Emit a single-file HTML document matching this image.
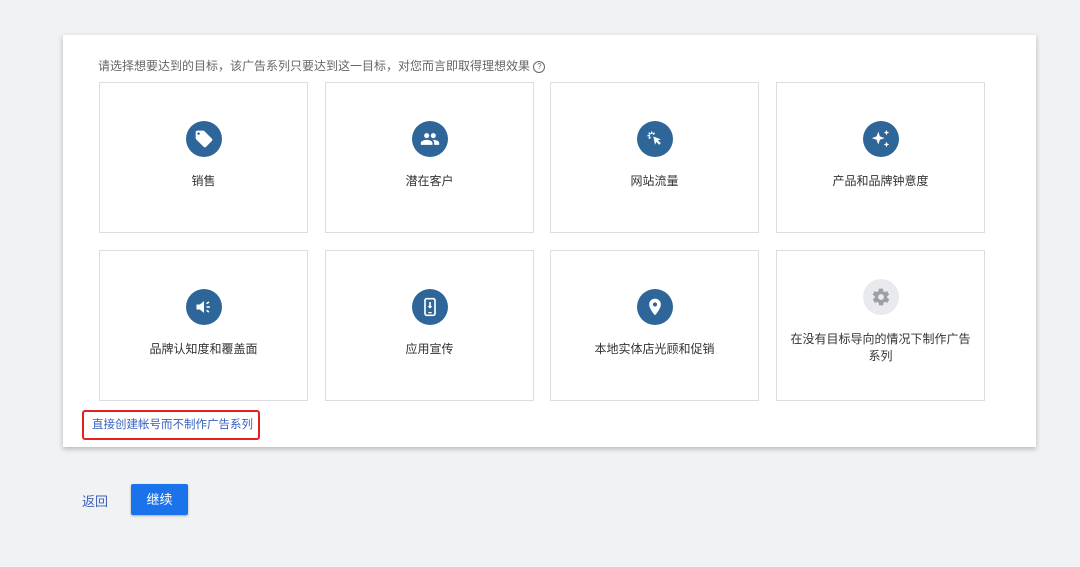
<!DOCTYPE html>
<html><head><meta charset="utf-8"><style>
body{margin:0;width:1080px;height:567px;background:#f1f2f4;font-family:"Liberation Sans","Noto Sans CJK SC",sans-serif;position:relative;overflow:hidden}
.panel{position:absolute;left:63px;top:35px;width:973px;height:412px;background:#fff;box-shadow:0 2px 5px rgba(0,0,0,.25)}
.hint{position:absolute;left:98px;top:57px;font-size:12px;color:#666}
.card{position:absolute;width:207px;height:149px;border:1.5px solid #dcdde0;box-sizing:content-box;background:#fff}
.ic{position:absolute;left:86px;top:38px;width:36px;height:36px;border-radius:50%;background:#2f6699;display:flex;align-items:center;justify-content:center}
.lb{position:absolute;left:0;right:0;top:90px;text-align:center;font-size:12px;color:#333;line-height:17px}
.link{position:absolute;left:82px;top:410px;width:166px;height:26px;border:2px solid #e52020;border-radius:3px;font-size:11.5px;color:#3560c0;line-height:26px;padding-left:8px;box-sizing:content-box;white-space:nowrap}
.back{position:absolute;left:82px;top:491px;font-size:13px;color:#3a5fb8}
.btn{position:absolute;left:131px;top:484px;width:57px;height:31px;background:#1a73e8;border-radius:2px;color:#fff;font-size:13px;text-align:center;line-height:31px;box-shadow:0 1px 2px rgba(0,0,0,.3)}
</style></head><body>
<div class="panel"></div>
<div class="hint">请选择想要达到的目标，该广告系列只要达到这一目标，对您而言即取得理想效果 <span style="display:inline-block;width:10px;height:10px;border:1px solid #666;border-radius:50%;font-size:8px;line-height:10px;text-align:center;vertical-align:1px">?</span></div>

<div class="card" style="left:99px;top:82px"><div class="ic"><svg width="20" height="20" viewBox="0 0 24 24"><path fill="#fff" d="M21.4 11.6l-9-9C12 2.2 11.6 2 11 2H4c-1.1 0-2 .9-2 2v7c0 .6.2 1.1.6 1.4l9 9c.4.4.9.6 1.4.6s1-.2 1.4-.6l7-7c.4-.4.6-.9.6-1.4s-.2-1-.6-1.4zM5.5 7C4.7 7 4 6.3 4 5.5S4.7 4 5.5 4 7 4.7 7 5.5 6.3 7 5.5 7z"/></svg></div><div class="lb">销售</div></div>
<div class="card" style="left:325px;top:82px"><div class="ic"><svg width="20" height="20" viewBox="0 0 24 24"><path fill="#fff" d="M16 11c1.7 0 3-1.3 3-3s-1.3-3-3-3-3 1.3-3 3 1.3 3 3 3zm-8 0c1.7 0 3-1.3 3-3S9.7 5 8 5 5 6.3 5 8s1.3 3 3 3zm0 2c-2.3 0-7 1.2-7 3.5V19h14v-2.5c0-2.3-4.7-3.5-7-3.5zm8 0c-.3 0-.6 0-1 .1 1.2.8 2 2 2 3.4V19h6v-2.5c0-2.3-4.7-3.5-7-3.5z"/></svg></div><div class="lb">潜在客户</div></div>
<div class="card" style="left:550px;top:82px"><div class="ic"><svg width="20" height="20" viewBox="0 0 24 24"><path fill="#fff" d="M10 9l9 3.5-3.5 1.2L19 17l-2 2-3.3-3.5L12 19z"/><path stroke="#fff" stroke-width="1.8" d="M8 3v3M3 8h3M4.5 4.5l2 2M11.5 4.5l-2 2M4.5 11.5l2-2"/></svg></div><div class="lb">网站流量</div></div>
<div class="card" style="left:776px;top:82px"><div class="ic"><svg width="22" height="22" viewBox="0 0 24 24"><path fill="#fff" d="M9 4l1.8 5.2L16 11l-5.2 1.8L9 18l-1.8-5.2L2 11l5.2-1.8zM18 2l.9 2.1L21 5l-2.1.9L18 8l-.9-2.1L15 5l2.1-.9zM18 15l.9 2.1L21 18l-2.1.9L18 21l-.9-2.1L15 18l2.1-.9z"/></svg></div><div class="lb">产品和品牌钟意度</div></div>

<div class="card" style="left:99px;top:250px"><div class="ic"><svg width="20" height="20" viewBox="0 0 24 24"><path fill="#fff" d="M3 9h4l5-4v14l-5-4H3z"/><path stroke="#fff" stroke-width="1.8" d="M15 12h4M15 8l3-2M15 16l3 2"/></svg></div><div class="lb">品牌认知度和覆盖面</div></div>
<div class="card" style="left:325px;top:250px"><div class="ic"><svg width="20" height="20" viewBox="0 0 24 24"><rect x="6" y="2" width="12" height="20" rx="2" fill="none" stroke="#fff" stroke-width="2"/><path fill="#fff" d="M11 6h2v5h2l-3 3-3-3h2zM10 18h4v1.5h-4z"/></svg></div><div class="lb">应用宣传</div></div>
<div class="card" style="left:550px;top:250px"><div class="ic"><svg width="20" height="20" viewBox="0 0 24 24"><path fill="#fff" d="M12 2C8.1 2 5 5.1 5 9c0 5.2 7 13 7 13s7-7.8 7-13c0-3.9-3.1-7-7-7zm0 9.5c-1.4 0-2.5-1.1-2.5-2.5S10.6 6.5 12 6.5s2.5 1.1 2.5 2.5-1.1 2.5-2.5 2.5z"/></svg></div><div class="lb">本地实体店光顾和促销</div></div>
<div class="card" style="left:776px;top:250px"><div class="ic" style="top:28px;background:#e8eaed"><svg width="20" height="20" viewBox="0 0 24 24"><path fill="#9aa0a6" d="M19.4 13c0-.3.1-.6.1-1s0-.7-.1-1l2.1-1.6c.2-.2.2-.4.1-.6l-2-3.5c-.1-.2-.4-.3-.6-.2l-2.5 1c-.5-.4-1.1-.7-1.700-1L14.4 2.4c0-.2-.2-.4-.5-.4h-4c-.2 0-.5.2-.5.4l-.4 2.7c-.6.2-1.1.6-1.7 1l-2.5-1c-.2-.1-.5 0-.6.2l-2 3.5c-.1.2-.1.5.1.6L4.6 11c0 .3-.1.6-.1 1s0 .7.1 1l-2.1 1.6c-.2.2-.2.4-.1.6l2 3.5c.1.2.4.3.6.2l2.5-1c.5.4 1.1.7 1.7 1l.4 2.7c0 .2.2.4.5.4h4c.2 0 .5-.2.5-.4l.4-2.7c.6-.3 1.2-.6 1.7-1l2.5 1c.2.1.5 0 .6-.2l2-3.5c.1-.2.1-.5-.1-.6zM12 15.5c-1.900 0-3.5-1.6-3.5-3.5s1.6-3.5 3.5-3.5 3.5 1.6 3.5 3.5-1.6 3.5-3.5 3.5z"/></svg></div><div class="lb" style="top:80px;padding:0 10px">在没有目标导向的情况下制作广告系列</div></div>

<div class="link">直接创建帐号而不制作广告系列</div>
<div class="back">返回</div>
<div class="btn">继续</div>
</body></html>
